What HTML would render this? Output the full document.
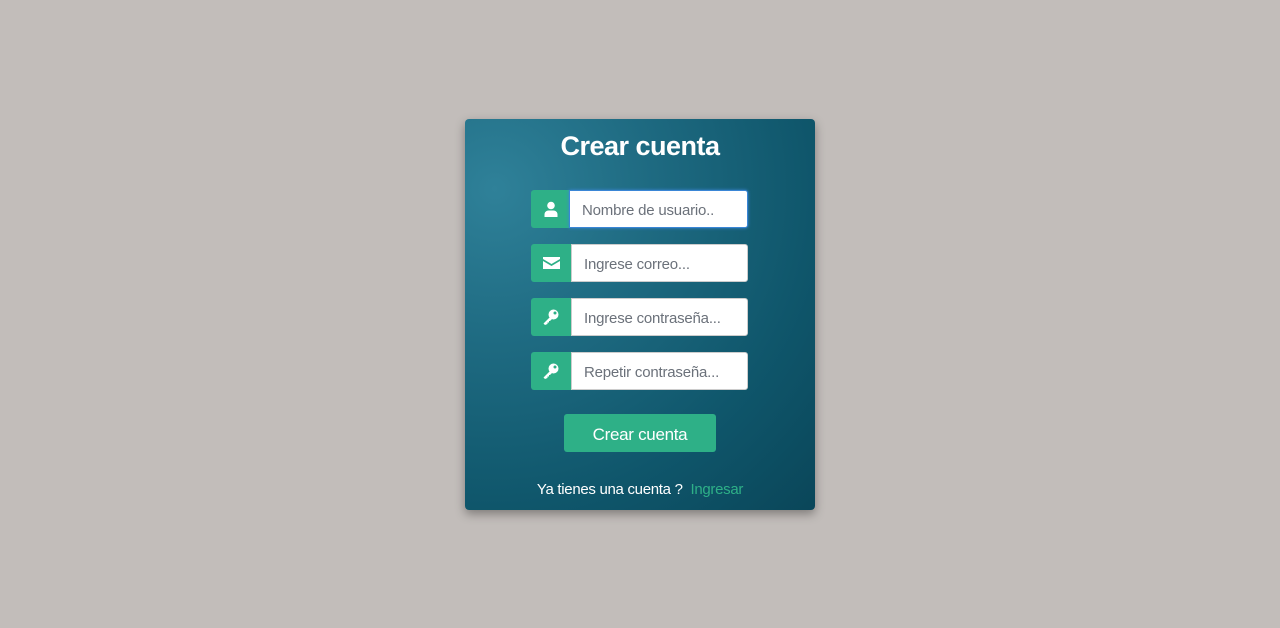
<!DOCTYPE html>
<html><head><style>
body{margin:0;width:1280px;height:628px;background:#c2bdba;font-family:"Liberation Sans",sans-serif;position:relative;overflow:hidden}
.card{position:absolute;left:465px;top:119px;width:350px;height:391px;border-radius:4px;background:radial-gradient(circle at 30px 70px,#2f8199 0%,#1e6a81 35%,#0f566b 70%,#0a4659 100%);box-shadow:0 4px 10px rgba(0,0,0,.35)}
h1{position:absolute;left:0;right:0;top:12px;margin:0;text-align:center;color:#fff;font-size:27px;font-weight:bold;letter-spacing:-0.5px}
.g{position:absolute;left:66px;width:217px;height:38px}
.ic{position:absolute;left:0;top:0;width:40px;height:38px;background:#2eb087;border-radius:3px 0 0 3px}
.ic svg{position:absolute;left:12px;top:11px}
.in{position:absolute;left:40px;right:0;top:0;height:36px;background:#fff;border:1px solid #ccc;border-radius:0 3px 3px 0;color:#6b717a;font-size:15px;line-height:39px;padding-left:12px;box-sizing:content-box;width:163px;letter-spacing:-0.2px}
.f .in{left:38px;border:1px solid #3a86d6;box-shadow:0 0 3px #3a86d6;width:165px}
.btn{position:absolute;left:99px;top:295px;width:152px;height:38px;background:#2eb087;border-radius:3px;color:#fff;font-size:17px;text-align:center;line-height:42px;letter-spacing:-0.3px}
.ft{position:absolute;left:0;right:0;top:362px;text-align:center;color:#fff;font-size:15px;letter-spacing:-0.3px}
.ft span{color:#2eb087;margin-left:4px}
</style></head><body>
<div class="card">
<h1>Crear cuenta</h1>
<div class="g f" style="top:71px"><div class="ic"><svg width="16" height="16" viewBox="0 0 16 16"><circle cx="8" cy="4.5" r="3.8" fill="#fff"/><path d="M1.5 16v-2.5c0-2.5 2-4 4-4h5c2 0 4 1.5 4 4V16z" fill="#fff"/></svg></div><div class="in">Nombre de usuario..</div></div>
<div class="g" style="top:125px"><div class="ic"><svg width="17" height="16" viewBox="0 0 17 16"><path d="M0 2h17v2L8.5 9 0 4z" fill="#fff"/><path d="M0 6l8.5 5L17 6v8H0z" fill="#fff"/></svg></div><div class="in">Ingrese correo...</div></div>
<div class="g" style="top:179px"><div class="ic"><svg width="16" height="16" viewBox="0 0 16 16"><circle cx="10.5" cy="5.5" r="5" fill="#fff"/><circle cx="12" cy="4" r="1.5" fill="#2eb087"/><path d="M7 8l2 2-2 2-1 0 0 1.5-1.5 0 0 1.5-2.5 1-1.5-1.5z" fill="#fff"/></svg></div><div class="in">Ingrese contraseña...</div></div>
<div class="g" style="top:233px"><div class="ic"><svg width="16" height="16" viewBox="0 0 16 16"><circle cx="10.5" cy="5.5" r="5" fill="#fff"/><circle cx="12" cy="4" r="1.5" fill="#2eb087"/><path d="M7 8l2 2-2 2-1 0 0 1.5-1.5 0 0 1.5-2.5 1-1.5-1.5z" fill="#fff"/></svg></div><div class="in">Repetir contraseña...</div></div>
<div class="btn">Crear cuenta</div>
<div class="ft">Ya tienes una cuenta ? <span>Ingresar</span></div>
</div>
</body></html>
